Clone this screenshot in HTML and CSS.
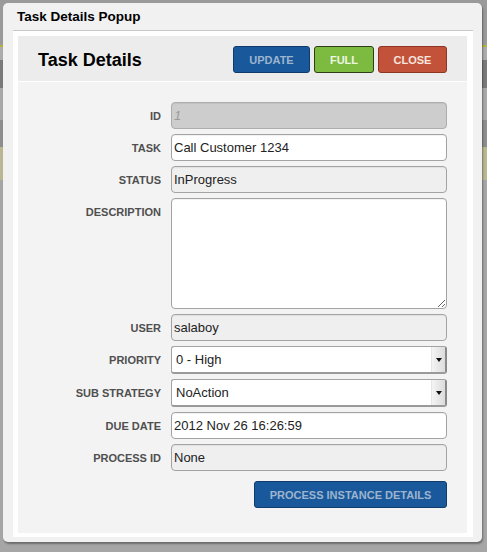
FILE: index.html
```html
<!DOCTYPE html>
<html lang="en">
<head>
<meta charset="utf-8">
<title>Task Details Popup</title>
<link rel="stylesheet" href="styles.css">
</head>
<body>
<div class="backdrop">
  <div class="modal">
    <div class="modal-title">Task Details Popup</div>
    <div class="frame">
      <div class="panel">
        <div class="panel-header">
          <h1 class="panel-heading">Task Details</h1>
          <div class="actions">
            <button class="btn btn-blue btn-update">UPDATE</button>
            <button class="btn btn-green btn-full">FULL</button>
            <button class="btn btn-red btn-close">CLOSE</button>
          </div>
        </div>
        <div class="form">
          <label class="label">ID</label>
          <input class="field field-disabled" placeholder="1" disabled>

          <label class="label">TASK</label>
          <input class="field" value="Call Customer 1234">

          <label class="label">STATUS</label>
          <input class="field field-readonly" value="InProgress" readonly>

          <label class="label">DESCRIPTION</label>
          <textarea class="field field-area"></textarea>

          <label class="label">USER</label>
          <input class="field field-readonly" value="salaboy" readonly>

          <label class="label label-select">PRIORITY</label>
          <div class="select">
            <span class="select-value">0 - High</span>
            <span class="select-arrow"><span class="caret"></span></span>
          </div>

          <label class="label label-select">SUB STRATEGY</label>
          <div class="select">
            <span class="select-value">NoAction</span>
            <span class="select-arrow"><span class="caret"></span></span>
          </div>

          <label class="label">DUE DATE</label>
          <input class="field" value="2012 Nov 26 16:26:59">

          <label class="label">PROCESS ID</label>
          <input class="field field-readonly" value="None" readonly>

          <div class="form-footer">
            <button class="btn btn-blue btn-process">PROCESS INSTANCE DETAILS</button>
          </div>
        </div>
      </div>
    </div>
  </div>
</div>
</body>
</html>
```

FILE: styles.css
```css
html, body {
  margin: 0;
  padding: 0;
}

body {
  font-family: "Liberation Sans", Arial, sans-serif;
  width: 487px;
  height: 552px;
  overflow: hidden;
}

.backdrop {
  width: 487px;
  height: 552px;
  padding: 3px 0 0 3px;
  box-sizing: border-box;
  background: linear-gradient(to bottom,
    #9a9a9a 0, #9a9a9a 45px,
    #b3b43a 45px, #b3b43a 47px,
    #acacac 47px, #acacac 60px,
    #7a7a7a 60px, #7a7a7a 88px,
    #a9a9a9 88px, #a9a9a9 120px,
    #8e8e8e 120px, #8e8e8e 147px,
    #b9b892 147px, #b9b892 180px,
    #a6a6a6 180px, #a6a6a6 100%);
}

.modal {
  width: 479px;
  height: 539px;
  background: #f1f1f1;
  border-radius: 5px;
  box-shadow: 1px 2px 2px rgba(0, 0, 0, 0.35);
  box-sizing: border-box;
}

.modal-title {
  height: 27px;
  line-height: 28px;
  margin: 0 9px 0 10px;
  padding-left: 4px;
  font-size: 13.5px;
  font-weight: bold;
  color: #000;
  border-bottom: 1px solid #c9c9c9;
}

.frame {
  margin: 0 9px 0 10px;
  background: #fff;
  padding: 5px 6px 4px 5px;
}

.panel {
  height: 497px;
  background: #f3f3f3;
  box-sizing: border-box;
}

.panel-header {
  height: 45px;
  background: #ececec;
  border-bottom: 1px solid #fff;
  display: flex;
  align-items: flex-start;
  justify-content: space-between;
  padding: 0 20px;
}

.panel-heading {
  margin: 13px 0 0 0;
  font-size: 18px;
  line-height: 22px;
  font-weight: bold;
  color: #000;
}

.actions {
  display: flex;
  gap: 4px;
  margin-top: 10px;
}

.btn {
  height: 27px;
  box-sizing: border-box;
  border-radius: 3px;
  font-family: "Liberation Sans", Arial, sans-serif;
  font-size: 11px;
  font-weight: bold;
  padding: 0;
  cursor: pointer;
}

.btn-blue {
  background: #19599b;
  border: 1px solid #0f3c6b;
  color: #9db4cf;
}

.btn-green {
  background: #7dbb40;
  border: 1px solid #2e3d1a;
  color: #eef6e2;
}

.btn-red {
  background: #c2533a;
  border: 1px solid #8e3624;
  color: #f6e4df;
}

.btn-update { width: 77px; }
.btn-full { width: 60px; }
.btn-close { width: 69px; }
.btn-process { width: 193px; }

.form {
  display: grid;
  grid-template-columns: 143px 276px;
  column-gap: 10px;
  row-gap: 5px;
  padding-top: 20px;
}

.label {
  text-align: right;
  font-size: 11px;
  line-height: 13px;
  font-weight: bold;
  color: #4f4f4f;
  padding-top: 8px;
}

.label-select {
  padding-top: 8px;
}

.field {
  box-sizing: border-box;
  height: 27px;
  width: 276px;
  margin: 0;
  border: 1px solid #a3a3a3;
  border-radius: 4px;
  padding: 0 2px;
  font-family: "Liberation Sans", Arial, sans-serif;
  font-size: 13px;
  color: #222;
  background: #fff;
  box-shadow: inset 0 1px 1px rgba(0, 0, 0, 0.06);
  outline: none;
}

.field-disabled {
  background: #cdcdcd;
  border-color: #adadad;
}

.field-disabled::placeholder {
  color: #9a9a9a;
  font-style: italic;
}

.field-readonly {
  background: #efefef;
}

.field-area {
  height: 111px;
  resize: both;
  padding: 2px;
}

.select {
  box-sizing: border-box;
  height: 28px;
  width: 276px;
  display: flex;
  background: #fff;
  border: 1px solid #a3a3a3;
  border-right: 2px solid #8a8a8a;
  border-bottom: 2px solid #9a9a9a;
  border-radius: 3px;
  font-size: 13px;
  color: #222;
}

.select-value {
  flex: 1;
  line-height: 25px;
  padding-left: 4px;
}

.select-arrow {
  width: 13px;
  background: linear-gradient(to right, #f4f4f4, #dcdcdc);
  border-left: 1px solid #e6e6e6;
  display: flex;
  align-items: center;
  justify-content: center;
}

.caret {
  width: 0;
  height: 0;
  border-left: 3px solid transparent;
  border-right: 3px solid transparent;
  border-top: 4px solid #111;
}

.form-footer {
  grid-column: 2;
  display: flex;
  justify-content: flex-end;
  padding-top: 5px;
}
```
